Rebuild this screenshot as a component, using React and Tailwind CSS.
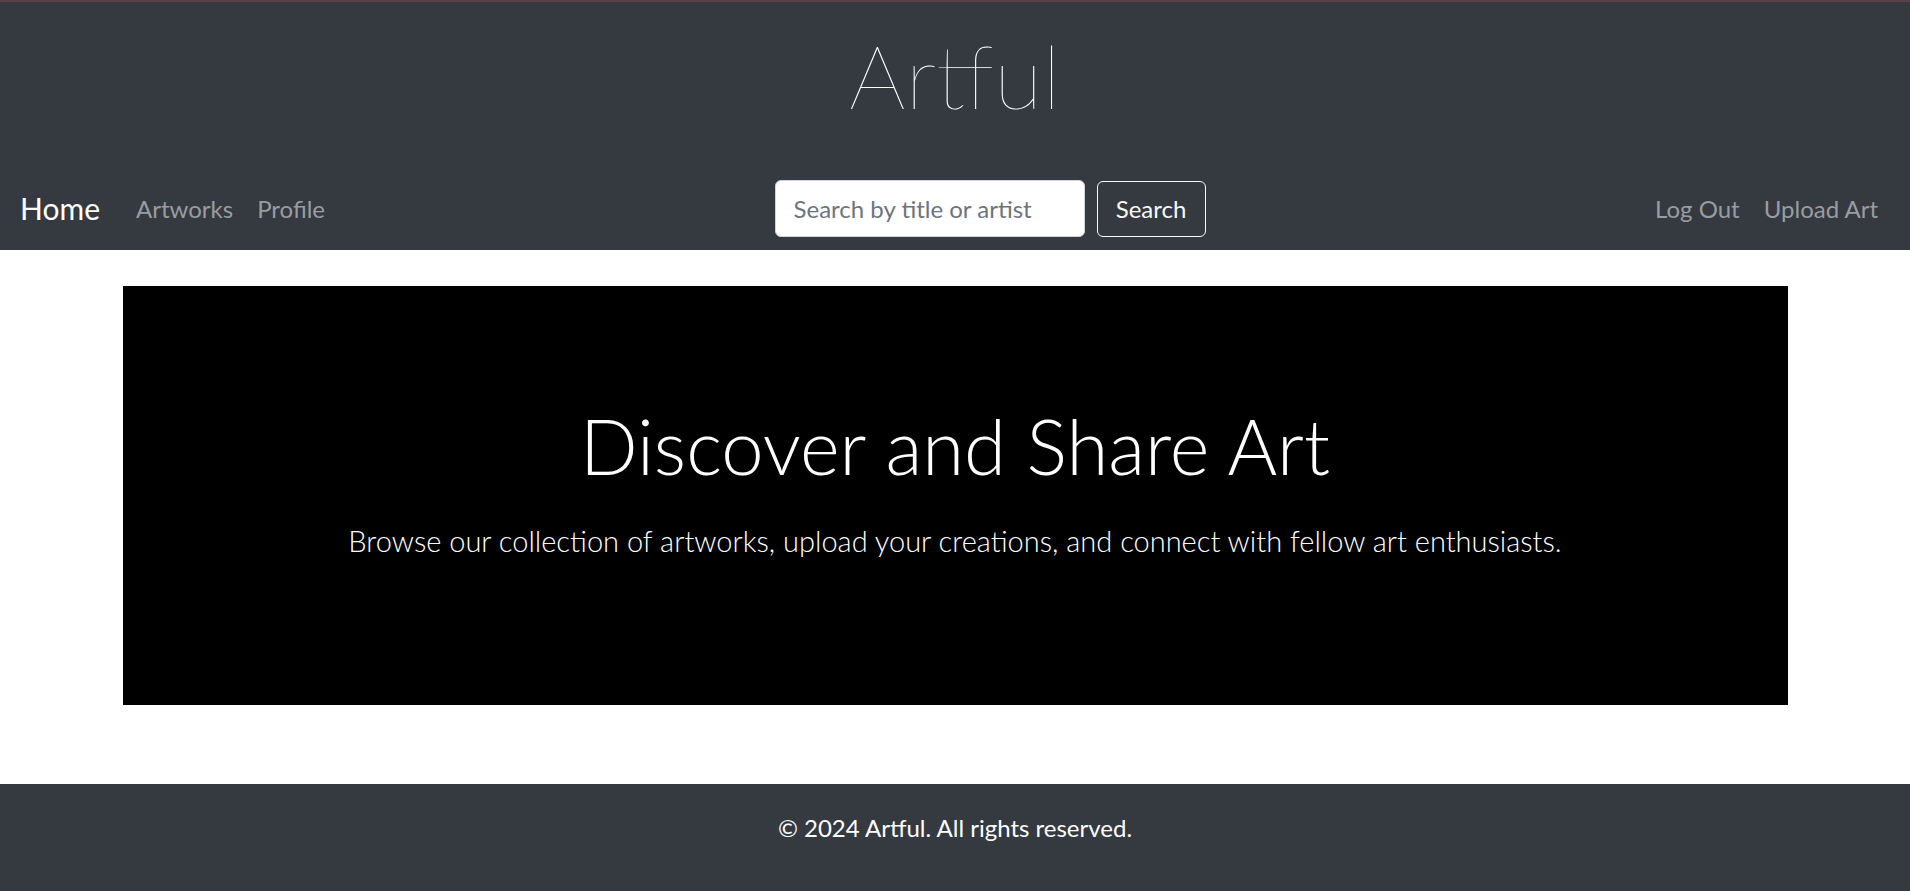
export default function App() {
  return (
    <div className="flex min-h-screen flex-col bg-white font-['Lato',_'Liberation_Sans',_sans-serif]">
      <header className="border-t-2 border-[#5a3f43] bg-[#343a40]">
        <div className="pt-[28px]">
          <h1 className="text-center text-[89px] font-thin leading-none text-white">
            Artful
          </h1>
        </div>

        <nav className="mt-[48px] flex h-[83px] items-center px-5">
          <div className="flex items-center">
            <a href="#" className="mr-6 text-[30px] leading-[45px] text-white">
              Home
            </a>
            <a href="#" className="px-3 text-[24px] leading-[36px] text-[#9a9da0]">
              Artworks
            </a>
            <a href="#" className="px-3 text-[24px] leading-[36px] text-[#9a9da0]">
              Profile
            </a>
          </div>

          <form className="mx-auto flex items-center gap-3">
            <input
              type="text"
              placeholder="Search by title or artist"
              className="h-[57px] w-[310px] rounded-md border border-[#ced4da] bg-white px-[18px] text-[24px] text-[#495057] placeholder:text-[#6c757d] focus:outline-none"
            />
            <button
              type="button"
              className="h-[56px] w-[109px] rounded-md border border-[#f8f9fa] text-[24px] text-[#f8f9fa]"
            >
              Search
            </button>
          </form>

          <div className="flex items-center">
            <a href="#" className="px-3 text-[24px] leading-[36px] text-[#9a9da0]">
              Log Out
            </a>
            <a href="#" className="px-3 text-[24px] leading-[36px] text-[#9a9da0]">
              Upload Art
            </a>
          </div>
        </nav>
      </header>

      <main className="flex-1 pb-[79px] pt-[36px]">
        <section className="mx-auto h-[419px] w-[1665px] bg-black pt-[122px] text-center text-white">
          <h2 className="text-[76px] font-light leading-none">Discover and Share Art</h2>
          <p className="mt-[34px] text-[29px] font-light leading-[45px]">
            Browse our collection of artworks, upload your creations, and connect with fellow art enthusiasts.
          </p>
        </section>
      </main>

      <footer className="h-[107px] bg-[#343a40] pt-[26px] text-center">
        <p className="text-[24px] leading-[36px] text-white">© 2024 Artful. All rights reserved.</p>
      </footer>
    </div>
  );
}
